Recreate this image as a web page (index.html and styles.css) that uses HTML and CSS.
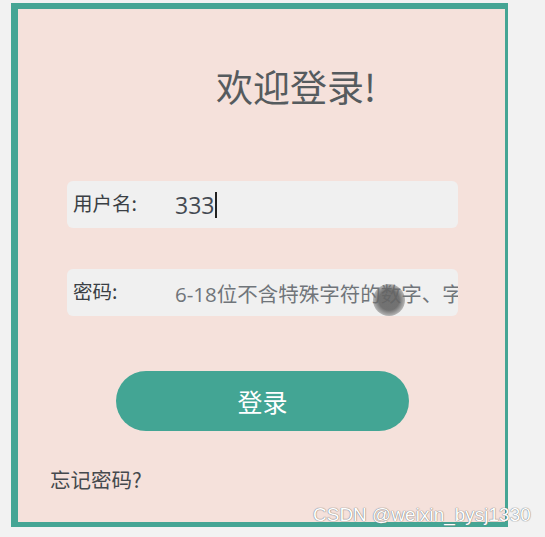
FILE: index.html
```html
<!DOCTYPE html>
<html lang="zh-CN">
<head>
    <meta charset="UTF-8">
    <title>登录</title>
	<link rel="stylesheet" href="styles.css">
</head>
<body>
	<div id="login">
		<h2 class="title">欢迎登录!</h2>
		<form class="form">
			<div class="field">
				<span class="label">用户名:</span>
				<span class="value">333</span><span class="caret"></span>
			</div>
			<div class="field field-pwd">
				<span class="label">密码:</span>
				<span class="hint">6-18位不含特殊字符的数字、字母组合</span>
				<span class="cursor"></span>
			</div>
			<div class="btn">登录</div>
		</form>
		<a class="forget" href="###">忘记密码?</a>
	</div>
	<div class="mark">CSDN @weixin_bysj1330</div>
</body>
</html>
```

FILE: styles.css
```css
*{
	padding: 0;
	margin: 0;
	box-sizing: border-box;
}
body{
	background: #f2f2f2;
	font-family: "Microsoft YaHei", "Noto Sans CJK SC", sans-serif;
	position: relative;
	height: 537px;
	overflow: hidden;
}
#login{
	margin: 3px 0 0 11px;
	width: 497px;
	height: 524px;
	background: #f5e1db;
	border-style: solid;
	border-color: #45a594;
	border-width: 6px 3px 5px 7px;
	display: flex;
	flex-direction: column;
}
.title{
	margin-top: 55px;
	padding-left: 198px;
	font-size: 37px;
	line-height: 44px;
	font-weight: normal;
	color: #555b5e;
}
.form{
	margin-top: 73px;
	padding-left: 49px;
	display: flex;
	flex-direction: column;
	gap: 41px;
}
.field{
	position: relative;
	width: 391px;
	height: 47px;
	background: #f0f0f0;
	border-radius: 6px;
	display: flex;
	align-items: center;
	padding-left: 6px;
	overflow: hidden;
	white-space: nowrap;
}
.label{
	width: 102px;
	font-size: 19.5px;
	color: #3a3f44;
	flex-shrink: 0;
	margin-top: -4px;
}
.value{
	font-family: "Open Sans", sans-serif;
	font-size: 23px;
	color: #444a52;
}
.caret{
	width: 2px;
	height: 26px;
	background: #222;
	margin-left: 1px;
}
.hint{
	font-family: "Open Sans", "Noto Sans CJK SC", sans-serif;
	font-size: 20.5px;
	color: #70757a;
}
.cursor{
	position: absolute;
	left: 306px;
	top: 15px;
	width: 32px;
	height: 32px;
	border-radius: 50%;
	background: radial-gradient(circle, rgba(100,100,100,0.9) 45%, rgba(120,120,120,0.5) 70%, rgba(150,150,150,0) 100%);
}
.btn{
	margin: 14px 0 0 49px;
	width: 293px;
	height: 60px;
	border-radius: 30px;
	background: #43a594;
	color: #fff;
	font-size: 25px;
	display: flex;
	align-items: center;
	justify-content: center;
}
.forget{
	margin: 33px 0 0 32px;
	font-size: 20.5px;
	color: #45494d;
	text-decoration: none;
}
.mark{
	position: absolute;
	left: 313px;
	top: 504px;
	font-family: "Liberation Sans", sans-serif;
	font-size: 19px;
	color: #fff;
	text-shadow: 0 0 1px #777, 0 0 1px #777;
}
```
